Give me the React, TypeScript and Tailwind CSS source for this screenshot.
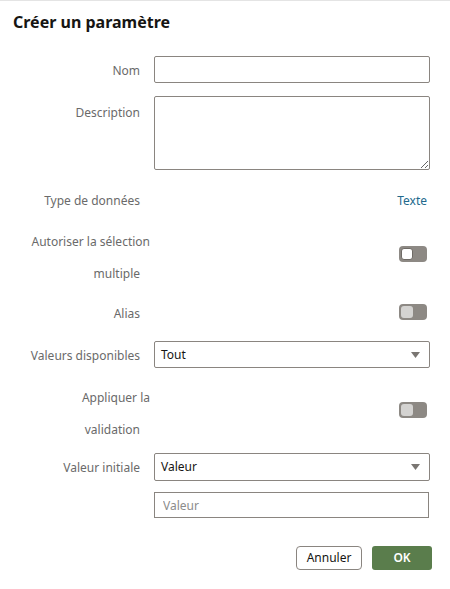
import React from "react";

const font = { fontFamily: '"Noto Sans", "Open Sans", sans-serif' };

function Toggle({ on = false }: { on?: boolean }) {
  return (
    <div className="w-[28px] h-[16px] rounded-[4px] bg-[#8d8984] flex items-center pl-[2px]">
      <div
        className={
          on
            ? "w-[12px] h-[12px] rounded-[3px] bg-white border border-[#6f6b66]"
            : "w-[12px] h-[12px] rounded-[3px] bg-[#d4d3d1]"
        }
      />
    </div>
  );
}

function Arrow() {
  return (
    <svg width="9" height="6" viewBox="0 0 9 6" className="shrink-0">
      <path d="M0 0 L9 0 L4.5 6 Z" fill="#7a7672" />
    </svg>
  );
}

function Select({ value }: { value: string }) {
  return (
    <div className="w-[276px] h-[27px] border border-[#8a8580] rounded-[2px] flex items-center justify-between pl-[6px] pr-[9px] bg-white">
      <span className="text-[12px] text-[#161513]">{value}</span>
      <Arrow />
    </div>
  );
}

export default function App() {
  return (
    <div
      className="w-[450px] h-[589px] bg-white border-t border-[#e4e4e4] text-[#6a6a6a] text-[12px]"
      style={font}
    >
      <div className="pl-[13px] pt-[9px] text-[16px] leading-[24px] font-bold text-[#161513]">
        Créer un paramètre
      </div>

      {/* Nom */}
      <div className="mt-[22px] flex items-center gap-[14px]">
        <div className="w-[140px] text-right leading-[18px] pt-[2px]">Nom</div>
        <input
          className="w-[276px] h-[27px] border border-[#8a8580] rounded-[2px] outline-none bg-white"
          aria-label="Nom"
        />
      </div>

      {/* Description */}
      <div className="mt-[13px] flex items-start gap-[14px]">
        <div className="w-[140px] text-right leading-[18px] pt-[8px]">Description</div>
        <textarea
          className="w-[276px] h-[74px] border border-[#8a8580] rounded-[2px] outline-none bg-white block"
          aria-label="Description"
        />
      </div>

      {/* Type de données */}
      <div className="mt-[20px] h-[20px] flex items-center gap-[14px]">
        <div className="w-[140px] text-right leading-[18px] pt-[2px]">Type de données</div>
        <div className="w-[276px] text-right pr-[3px] pt-[2px] text-[#22698c]">Texte</div>
      </div>

      {/* Autoriser la sélection multiple */}
      <div className="mt-[14px] flex items-center gap-[14px]">
        <div className="w-[140px] text-right leading-[32px] pt-[2px]">
          <div className="whitespace-nowrap mr-[-10px]">Autoriser la sélection</div>
          <div>multiple</div>
        </div>
        <div className="w-[276px] flex justify-end pr-[3px] mb-[6px]">
          <Toggle on />
        </div>
      </div>

      {/* Alias */}
      <div className="mt-[6px] flex items-center gap-[14px]">
        <div className="w-[140px] text-right leading-[32px] pt-[2px]">Alias</div>
        <div className="w-[276px] flex justify-end pr-[3px] mb-[2px]">
          <Toggle />
        </div>
      </div>

      {/* Valeurs disponibles */}
      <div className="mt-[11px] flex items-center gap-[14px]">
        <div className="w-[140px] text-right leading-[18px] pt-[2px]">Valeurs disponibles</div>
        <Select value="Tout" />
      </div>

      {/* Appliquer la validation */}
      <div className="mt-[12px] flex items-center gap-[14px]">
        <div className="w-[140px] text-right leading-[32px] pt-[2px]">
          <div className="whitespace-nowrap mr-[-10px]">Appliquer la</div>
          <div>validation</div>
        </div>
        <div className="w-[276px] flex justify-end pr-[3px] mb-[6px]">
          <Toggle />
        </div>
      </div>

      {/* Valeur initiale */}
      <div className="mt-[7px] flex items-center gap-[14px]">
        <div className="w-[140px] text-right leading-[18px] pt-[2px]">Valeur initiale</div>
        <div className="w-[276px] h-[28px] border border-[#8a8580] rounded-[2px] flex items-center justify-between pl-[6px] pr-[9px] bg-white">
          <span className="text-[12px] text-[#161513]">Valeur</span>
          <Arrow />
        </div>
      </div>

      {/* Valeur input */}
      <div className="mt-[11px] pl-[154px]">
        <input
          className="w-[275px] h-[26px] border border-[#8a8580] outline-none bg-white px-[8px] text-[12px] placeholder:text-[#8c8c8c]"
          placeholder="Valeur"
        />
      </div>

      {/* Buttons */}
      <div className="mt-[28px] flex justify-end gap-[10px] pr-[18px]">
        <button className="w-[66px] h-[24px] border border-[#8a8580] rounded-[4px] bg-white text-[12px] text-[#161513]">
          Annuler
        </button>
        <button className="w-[60px] h-[24px] rounded-[3px] bg-[#5a7d4c] text-[12px] text-white font-semibold">
          OK
        </button>
      </div>
    </div>
  );
}
